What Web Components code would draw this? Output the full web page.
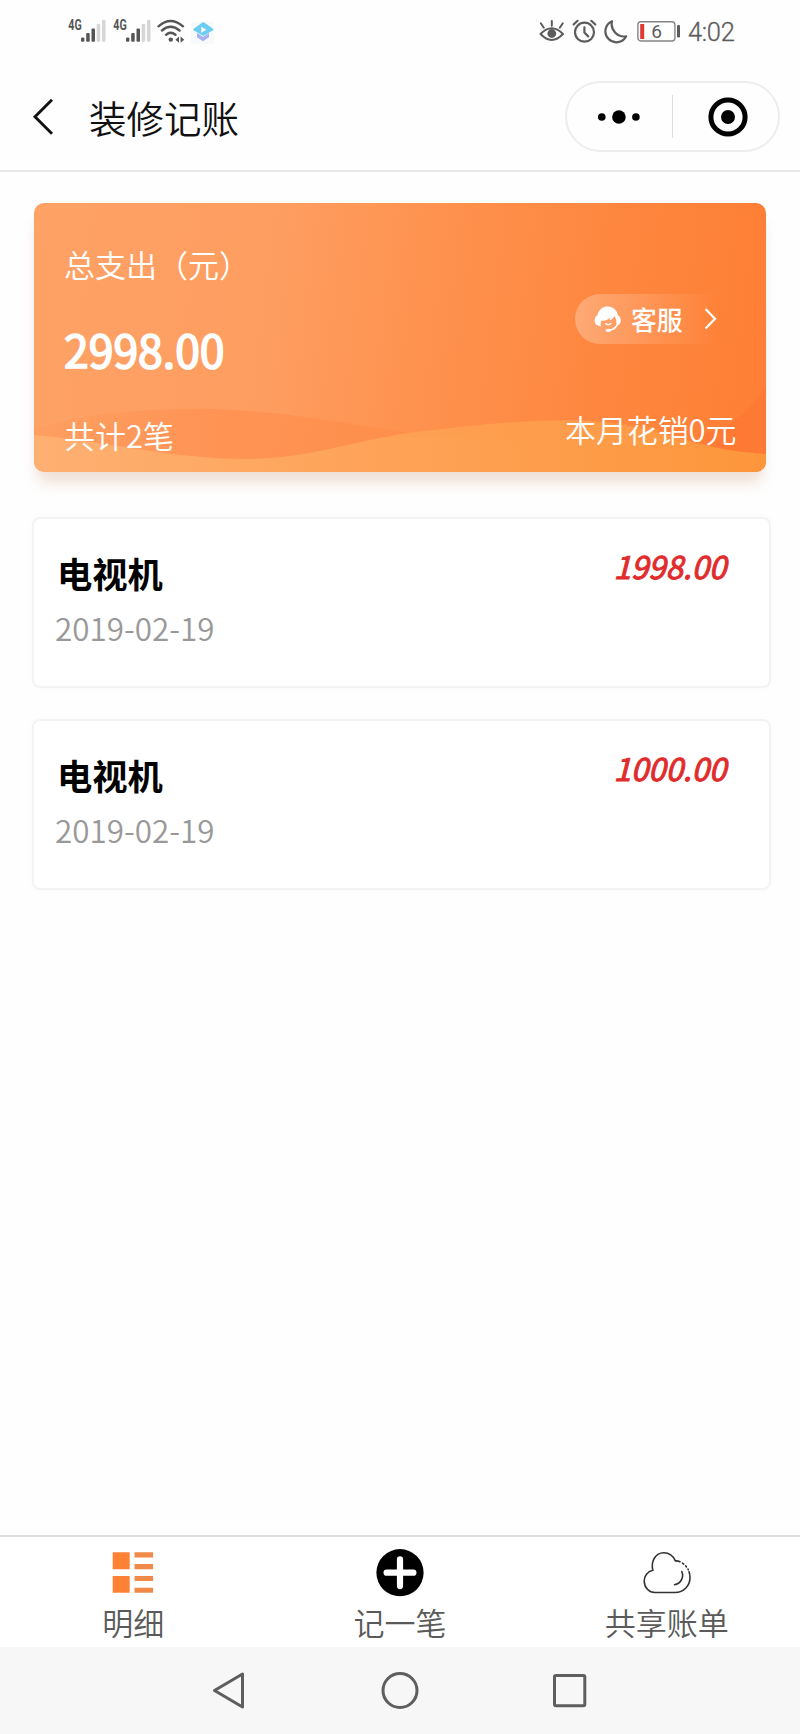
<!DOCTYPE html>
<html lang="zh-CN">
<head>
<meta charset="utf-8">
<title>装修记账</title>
<style>
html,body{margin:0;padding:0}
body{width:800px;height:1734px;overflow:hidden;background:#fefefe;color:#000;font-family:"Noto Sans CJK SC",sans-serif}
</style>
</head>
<body>
<ledger-app></ledger-app>
<script>
const define = (name, html) => {
  const t = document.createElement('template');
  t.innerHTML = html;
  customElements.define(name, class extends HTMLElement {
    constructor() {
      super();
      this.attachShadow({ mode: 'open' }).appendChild(t.content.cloneNode(true));
    }
  });
};

define('signal-bars', `
<style>:host{display:block;width:38px;height:32px;margin-top:-8px}svg{display:block;overflow:visible}</style>
<svg width="38" height="32" viewBox="0 -8 38 32">
  <text x="0.3" y="11.3" font-family="Roboto" font-weight="700" font-size="14" fill="#555" textLength="13.4" lengthAdjust="spacingAndGlyphs">4G</text>
  <g fill="#555"><rect x="13" y="18.4" width="3.4" height="4.4" rx="1.2"/><rect x="18.2" y="14" width="3.5" height="8.8" rx="1"/><rect x="23.5" y="9.5" width="3.5" height="13.3" rx="1"/></g>
  <g fill="#d6d6d6"><rect x="28.7" y="5" width="3.5" height="17.8" rx="1"/><rect x="34" y="0.8" width="3.5" height="22" rx="1"/></g>
</svg>`);

define('status-bar', `
<style>
:host{display:flex;height:64px;box-sizing:border-box;padding:19px 65.5px 0 68px;justify-content:space-between;align-items:flex-start;color:#5c5c5c}
.g{display:flex;align-items:flex-start}
svg{display:block}
signal-bars+signal-bars{margin-left:7px}
.time{font:400 25.5px/26px Roboto,sans-serif;font-weight:300;-webkit-text-stroke:.3px #5c5c5c;letter-spacing:-.3px}
</style>
<div class="g">
  <signal-bars></signal-bars><signal-bars></signal-bars>
  <svg style="margin-left:6px" width="28" height="24" viewBox="0 0 28 24" fill="none" stroke="#555" stroke-width="2.4" stroke-linecap="round">
    <path d="M1.5 7.3Q13.5-3.5 26 7.3M5 11.5Q13.5 4 22.5 11.5M9 15.8Q13.5 11.8 18.5 15.8"/>
    <circle cx="13.8" cy="20.6" r="2.2" fill="#555" stroke="none"/>
    <path d="M22 17.6v6.2l-3.6-3.1zM23.6 17.6v6.2l3.6-3.1z" fill="#555" stroke="none"/>
  </svg>
  <svg style="margin-left:6px" width="24" height="25" viewBox="0 0 24 25">
    <rect y="3" width="23" height="22" fill="#f7f9fd"/>
    <path d="M6 14l6 4 6-4v4.2l-6 4-6-4z" fill="#a6b1ee"/>
    <path d="M11.3 3.5q1-.7 2 0l8.6 6.2q1 .8 0 1.6l-8.6 5.2q-1 .6-2 0l-8.6-5.2q-1-.8 0-1.6z" fill="#6bcdf0"/>
    <path d="M10.3 7.7l5 3-5 3z" fill="#fff"/>
  </svg>
</div>
<div class="g">
  <svg width="26" height="25" viewBox="0 0 26 25" fill="none" stroke="#5c5c5c" stroke-width="2" stroke-linecap="round" stroke-linejoin="round">
    <path d="M1.5 15Q12.7 3.4 24 15Q12.7 26.8 1.5 15zM12.8 2v4.8M1.8 4.3l3 4.4M23.8 4.3l-3 4.4"/><circle cx="12.8" cy="14.5" r="4.4" fill="#5c5c5c" stroke="none"/>
  </svg>
  <svg style="margin-left:7px" width="25" height="25" viewBox="0 0 25 25" fill="none" stroke="#5c5c5c" stroke-width="2.2" stroke-linecap="round">
    <circle cx="12.5" cy="13.2" r="9.5"/><path d="M12.4 8.3v5.3l3.8 3.8M1.6 5.5l4-3.7M23.3 5.5l-4-3.7"/>
  </svg>
  <svg style="margin-left:6px" width="25" height="25" viewBox="0 0 25 25" fill="none" stroke="#5c5c5c" stroke-width="2.2" stroke-linejoin="round">
    <path d="M9 2.2A11 11 0 1 0 23.2 17.3A12.5 12.5 0 0 1 9 2.2z"/>
  </svg>
  <svg style="margin-left:9px" width="44" height="25" viewBox="0 0 44 25">
    <rect x=".9" y="2.7" width="37" height="19.3" rx="3" fill="#fff" stroke="#858585" stroke-width="1.4"/>
    <rect x="3.2" y="5" width="4" height="15" fill="#dd3a33"/><rect x="40" y="6" width="3" height="12.5" rx="1.2" fill="#5c5c5c"/>
    <text x="19.5" y="18.9" text-anchor="middle" font-family="Roboto" font-size="19" fill="#5c5c5c">6</text>
  </svg>
  <span class="time" style="margin-left:7px">4:02</span>
</div>`);

define('title-bar', `
<style>
:host{display:flex;height:108px;box-sizing:border-box;border-bottom:2px solid #e8e8e8;align-items:flex-start;padding:17px 20px 0 32px}
svg{display:block}
.back{margin-top:16.5px}
h1{margin:11px 0 0 35px;font-size:37.5px;line-height:50px;flex:1;font-weight:350;color:#111}
.capsule{display:flex;align-items:center;width:215px;height:71px;box-sizing:border-box;border:2px solid #ededed;border-radius:36px}
.half{flex:1;display:flex;justify-content:center}
.bar{width:1.5px;height:43px;background:#dcdcdc}
</style>
<svg class="back" width="22" height="38" viewBox="0 0 22 38" fill="none" stroke="#111" stroke-width="2.9"><path d="M20 1.8L3 18.8L20 35.8"/></svg>
<h1><slot></slot></h1>
<div class="capsule">
  <div class="half"><svg width="44" height="40" viewBox="0 0 44 40"><circle cx="4.8" cy="20" r="3.8"/><circle cx="21.9" cy="20" r="6.8"/><circle cx="38.9" cy="20" r="3.8"/></svg></div>
  <div class="bar"></div>
  <div class="half"><svg style="margin-left:5px" width="40" height="40" viewBox="0 0 40 40"><circle cx="20" cy="20" r="17.1" fill="none" stroke="#000" stroke-width="5"/><circle cx="20" cy="20" r="7"/></svg></div>
</div>`);

define('service-pill', `
<style>
:host{display:flex;align-items:center;box-sizing:border-box;width:150px;height:50px;padding-left:19px;border-radius:25px 0 0 25px;background:linear-gradient(90deg,rgba(255,255,255,.28),rgba(255,255,255,.13) 50%,rgba(255,255,255,0) 96%)}
span{font-size:25.8px;line-height:36px;font-weight:500;margin:-1px 21px 0 9px}
svg{display:block;flex:none}
</style>
<svg width="28" height="28" viewBox="0 0 28 28" fill="#fff">
  <path d="M3 20C-1 18 1 11 3.2 10.5C5 4 9 1.4 13.8 1.4C19 1.4 23 5 24 10.5C28 12 27.5 19 24 20L22.5 20.5Q23 14.5 20.5 11Q19 14.5 15 15.2L17 12.5Q11.5 16.5 7.5 15.5Q6 18 7 21.4Q4.5 21.4 3 20z"/>
  <path d="M11 18.4Q14 21.5 17.5 18.5Q14 20 11 18.4z" stroke="#fff" stroke-width=".8"/>
  <path d="M24 18Q22 24.5 15 25.3" fill="none" stroke="#fff" stroke-width="1.6"/><ellipse cx="14.2" cy="25.3" rx="2.7" ry="1.6"/>
</svg>
<span><slot></slot></span>
<svg width="13" height="24" viewBox="0 0 13 24" fill="none" stroke="#fff" stroke-width="2.2"><path d="M1.5 2L11 11.8L1.5 21.6"/></svg>`);

define('summary-card', `
<style>
:host{display:grid;grid-template-columns:1fr auto;position:relative;box-sizing:border-box;width:732px;height:269px;margin:31px 0 0 34px;padding:41px 29px 0 30px;border-radius:10px;color:#fff;font-size:31px;line-height:40px;background:linear-gradient(97deg,#fea266 0%,#fe9d60 33%,#fe924f 53%,#fe873f 76%,#fe7f35 98%);box-shadow:0 14px 14px -4px rgba(195,135,95,.27)}
.bg{position:absolute;inset:0;border-radius:10px}
.l,.r{position:relative;font-weight:350;white-space:nowrap}
.r{width:172px}
.total{font-size:44.5px;line-height:60px;margin:35px 0 36px;-webkit-text-stroke:1.7px #fff;font-weight:400}
.month{letter-spacing:-.1px}
service-pill{margin:50px 0 65px 10px}
</style>
<svg class="bg" width="732" height="269" viewBox="0 0 732 269">
  <defs>
    <clipPath id="c"><rect width="732" height="269" rx="10"/></clipPath>
    <linearGradient id="w"><stop offset="0" stop-color="#feb072"/><stop offset=".5" stop-color="#fea256"/><stop offset="1" stop-color="#fd963b"/></linearGradient>
    <linearGradient id="d"><stop offset="0" stop-color="#fe9250" stop-opacity=".2"/><stop offset=".5" stop-color="#fe8c4b" stop-opacity=".6"/><stop offset="1" stop-color="#fe843f" stop-opacity=".3"/></linearGradient>
  </defs>
  <g clip-path="url(#c)">
    <path d="M0 225C60 209 120 205 180 206C250 208 320 222 376 230L376 269H0z" fill="url(#d)"/>
    <path d="M732 184Q704 226 664 232L690 269H732z" fill="#fe7634" opacity=".6"/>
    <path d="M0 232C70 238 140 256 210 256C280 256 320 236 390 228C450 221 500 216 555 218C630 224 660 247 732 251V269H0z" fill="url(#w)"/>
    <path d="M350 235C430 230 500 242 590 241C620 241 640 237 655 235C610 218 540 214 490 219C430 222 400 227 350 235z" fill="#ff9d4c" opacity=".35"/>
  </g>
</svg>
<div class="l"><div><slot name="label"></slot></div><div class="total"><slot name="total"></slot></div><div><slot name="count"></slot></div></div>
<div class="r"><service-pill>客服</service-pill><div class="month"><slot name="month"></slot></div></div>`);

define('record-item', `
<style>
:host{display:flex;justify-content:space-between;align-items:flex-start;box-sizing:border-box;width:739px;height:171px;margin-left:32px;padding:31px 43px 0 21px;border:2px solid #f3f3f3;border-radius:8px;background:#fff;box-shadow:0 0 8px rgba(0,0,0,.02)}
.name{font-size:35.3px;line-height:46px;font-weight:700;margin-left:2px}
.date{font-size:31.4px;line-height:40px;color:#999;margin-top:12px;font-weight:350}
.amount{font-size:31.2px;line-height:40px;margin-top:-4px;font-style:italic;color:#e02c2c;-webkit-text-stroke:1px #e02c2c}
</style>
<div><div class="name"><slot name="name"></slot></div><div class="date"><slot name="date"></slot></div></div>
<div class="amount"><slot name="amount"></slot></div>`);

define('tab-item', `
<style>
:host{flex:1;display:flex;flex-direction:column;align-items:center;color:#5a5a5a;font-size:31px;line-height:40px;font-weight:350}
.i{height:48px;margin-top:12px}
.t{margin-top:5px}
</style>
<div class="i"><slot name="icon"></slot></div><div class="t"><slot></slot></div>`);

define('tab-bar', `
<style>:host{display:flex;height:112px;box-sizing:border-box;border-top:2px solid #dedede;background:#fff}svg{display:block}</style>
<tab-item><svg slot="icon" width="48" height="48" viewBox="0 0 48 48" fill="#fe8136"><path d="M3.7 3.3h17v17h-17zM3.7 27h17v16.7h-17z"/><path fill="#f18a49" d="M25.5 3.3h18.6v5.2H25.5zM25.5 15h18.6v5.3H25.5zM25.5 27h18.6v5.1H25.5zM25.5 38.7h18.6v5H25.5z"/></svg>明细</tab-item>
<tab-item><svg slot="icon" width="48" height="48" viewBox="0 0 48 48"><circle cx="24" cy="23.7" r="23.6"/><path d="M24 10.3v26.8M10.6 23.7h26.8" stroke="#fff" stroke-width="6.2" stroke-linecap="round"/></svg>记一笔</tab-item>
<tab-item><svg slot="icon" width="48" height="48" viewBox="0 0 48 48" fill="none" stroke="#333" stroke-width="1.6" stroke-linecap="round">
  <path d="M37 12.7Q34.5 11.6 32.4 11.9C30 6.5 25.5 3.7 20.5 3.8C13 4 7.5 11.5 9.8 21.3C4.5 22.5 1.2 27 1.2 32C1.2 38.5 6 43.5 12 43.5H32C41 43.5 47 36.5 47 28.5Q47 25.5 46 22.8"/><path d="M39.5 14.2l1.2.9M42.6 16.8l.9 1.1M45 20l.3.7"/><path d="M38.8 22.5C41.3 28.5 37.5 34.8 31.5 35.7"/></svg>共享账单</tab-item>`);

define('system-nav', `
<style>:host{display:flex;height:87px;background:#f7f7f7;justify-content:center;gap:131px;align-items:center}svg{display:block}</style>
<svg width="40" height="40" viewBox="0 0 40 40" fill="none" stroke="#5e5e5e" stroke-width="3" stroke-linejoin="round"><path d="M5.5 19.5L33.5 3v33z"/></svg>
<svg width="40" height="40" viewBox="0 0 40 40" fill="none" stroke="#5e5e5e" stroke-width="3"><circle cx="20" cy="19.5" r="17"/></svg>
<svg width="40" height="40" viewBox="0 0 40 40" fill="none" stroke="#5e5e5e" stroke-width="3"><rect x="3.5" y="4.5" width="30.3" height="30.3" rx="1.5"/></svg>`);

define('ledger-app', `
<style>
:host{display:flex;flex-direction:column;width:800px;height:1734px}
main{flex:1}
.list{display:flex;flex-direction:column;gap:31px;margin-top:45px}
</style>
<status-bar></status-bar>
<title-bar>装修记账</title-bar>
<main>
  <summary-card><span slot="label">总支出（元）</span><span slot="total">2998.00</span><span slot="count">共计2笔</span><span slot="month">本月花销0元</span></summary-card>
  <div class="list">
    <record-item><span slot="name">电视机</span><span slot="date">2019-02-19</span><span slot="amount">1998.00</span></record-item>
    <record-item><span slot="name">电视机</span><span slot="date">2019-02-19</span><span slot="amount">1000.00</span></record-item>
  </div>
</main>
<tab-bar></tab-bar>
<system-nav></system-nav>`);
</script>
</body>
</html>
